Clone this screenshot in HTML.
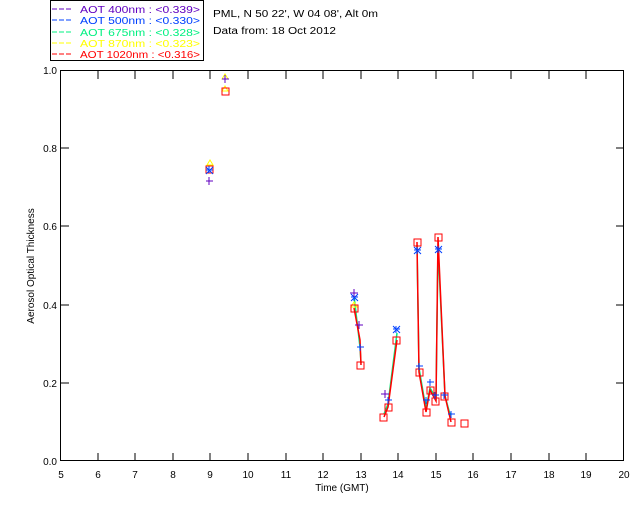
<!DOCTYPE html><html><head><style>body{margin:0;background:#fff}svg{display:block}text{font-family:"Liberation Sans",sans-serif;font-size:10px}</style></head><body>
<svg width="640" height="512" viewBox="0 0 640 512">
<rect x="50.5" y="0.5" width="153" height="60" fill="none" stroke="#000"/>
<g>
<line x1="52" y1="9" x2="73" y2="9" stroke="#6000c0" stroke-dasharray="5,2"/><text x="80" y="13" fill="#6000c0" textLength="120" lengthAdjust="spacingAndGlyphs">AOT  400nm : &lt;0.339&gt;</text>
<line x1="52" y1="20" x2="73" y2="20" stroke="#0040ff" stroke-dasharray="5,2"/><text x="80" y="24" fill="#0040ff" textLength="120" lengthAdjust="spacingAndGlyphs">AOT  500nm : &lt;0.330&gt;</text>
<line x1="52" y1="32" x2="73" y2="32" stroke="#00f080" stroke-dasharray="5,2"/><text x="80" y="36" fill="#00f080" textLength="120" lengthAdjust="spacingAndGlyphs">AOT  675nm : &lt;0.328&gt;</text>
<line x1="52" y1="43" x2="73" y2="43" stroke="#ffff00" stroke-dasharray="5,2"/><text x="80" y="47" fill="#ffff00" textLength="120" lengthAdjust="spacingAndGlyphs">AOT  870nm : &lt;0.323&gt;</text>
<line x1="52" y1="54" x2="73" y2="54" stroke="#ff0000" stroke-dasharray="5,2"/><text x="80" y="58" fill="#ff0000" textLength="120" lengthAdjust="spacingAndGlyphs">AOT 1020nm : &lt;0.316&gt;</text>
</g>
<text x="213" y="17" textLength="165" lengthAdjust="spacingAndGlyphs">PML, N 50 22', W 04 08', Alt 0m</text>
<text x="213" y="34" textLength="123" lengthAdjust="spacingAndGlyphs">Data from: 18 Oct 2012</text>
<rect x="60.5" y="70.5" width="563" height="390" fill="none" stroke="#000"/>
<g stroke="#000">
<path d="M98 461v-8M135 461v-8M173 461v-8M210 461v-8M248 461v-8M286 461v-8M323 461v-8M361 461v-8M398 461v-8M436 461v-8M473 461v-8M511 461v-8M549 461v-8M586 461v-8"/>
<path d="M98 71v8M135 71v8M173 71v8M210 71v8M248 71v8M286 71v8M323 71v8M361 71v8M398 71v8M436 71v8M473 71v8M511 71v8M549 71v8M586 71v8"/>
<path d="M61 383h8M61 305h8M61 226h8M61 148h8M624 383h-8M624 305h-8M624 226h-8M624 148h-8"/>
</g>
<g text-anchor="middle">
<text x="61" y="478">5</text><text x="98" y="478">6</text><text x="135" y="478">7</text><text x="173" y="478">8</text><text x="210" y="478">9</text><text x="248" y="478">10</text><text x="286" y="478">11</text><text x="323" y="478">12</text><text x="361" y="478">13</text><text x="398" y="478">14</text><text x="436" y="478">15</text><text x="473" y="478">16</text><text x="511" y="478">17</text><text x="549" y="478">18</text><text x="586" y="478">19</text><text x="624" y="478">20</text>
<text x="342" y="491">Time (GMT)</text>
</g>
<g text-anchor="end"><text x="57" y="465">0.0</text><text x="57" y="387">0.2</text><text x="57" y="309">0.4</text><text x="57" y="230">0.6</text><text x="57" y="152">0.8</text><text x="57" y="74">1.0</text></g>
<text transform="translate(34,266) rotate(-90)" text-anchor="middle" font-size="9">Aerosol Optical Thickness</text>
<g fill="none">
<g stroke="#00f080" stroke-width="1.5">
<polyline points="354,296 360,347 361,363"/>
<polyline points="384,414 388,404 397,333"/>
<polyline points="417,245 419,368 426,409 430,388 436,398 438,246 445,396 451,418"/>
</g>
<g stroke="#ff0000" stroke-width="1.5">
<polyline points="354,308 360,340 361,365"/>
<polyline points="384,417 388,407 397,340"/>
<polyline points="417,242 419,372 426,412 430,390 436,401 438,237 445,396 451,422"/>
</g>
<g stroke="#ffff00"><path d="M210 160l-3 5h6zM225 74l-3 5h6zM225 86l-3 5h6zM354 302l-3 5h6z"/></g>
<g stroke="#ff0000"><rect x="206" y="166" width="7" height="7"/><rect x="222" y="88" width="7" height="7"/><rect x="351" y="305" width="7" height="7"/><rect x="357" y="362" width="7" height="7"/><rect x="380" y="414" width="7" height="7"/><rect x="385" y="404" width="7" height="7"/><rect x="393" y="337" width="7" height="7"/><rect x="414" y="239" width="7" height="7"/><rect x="416" y="369" width="7" height="7"/><rect x="423" y="409" width="7" height="7"/><rect x="427" y="387" width="7" height="7"/><rect x="432" y="398" width="7" height="7"/><rect x="435" y="234" width="7" height="7"/><rect x="441" y="393" width="7" height="7"/><rect x="448" y="419" width="7" height="7"/><rect x="461" y="420" width="7" height="7"/></g>
<g stroke="#0040ff"><path d="M206 170h7M209 166v7M351 297h7M354 294v7M357 347h7M360 344v7M385 400h7M388 397v7M393 329h7M396 326v7M414 250h7M417 247v7M416 366h7M419 363v7M423 400h7M426 397v7M427 382h7M430 379v7M432 395h7M435 392v7M435 249h7M438 246v7M441 395h7M444 392v7M448 414h7M451 411v7M206 167l7 7M213 167l-7 7M351 294l7 7M358 294l-7 7M393 326l7 7M400 326l-7 7M414 247l7 7M421 247l-7 7M435 246l7 7M442 246l-7 7"/></g>
<g stroke="#6000c0"><path d="M206 181h7M209 177v8M222 79h7M225 75v8M350 293h8M354 289v8M355 325h8M359 321v8M381 394h8M385 390v8"/></g>
</g>
</svg></body></html>
